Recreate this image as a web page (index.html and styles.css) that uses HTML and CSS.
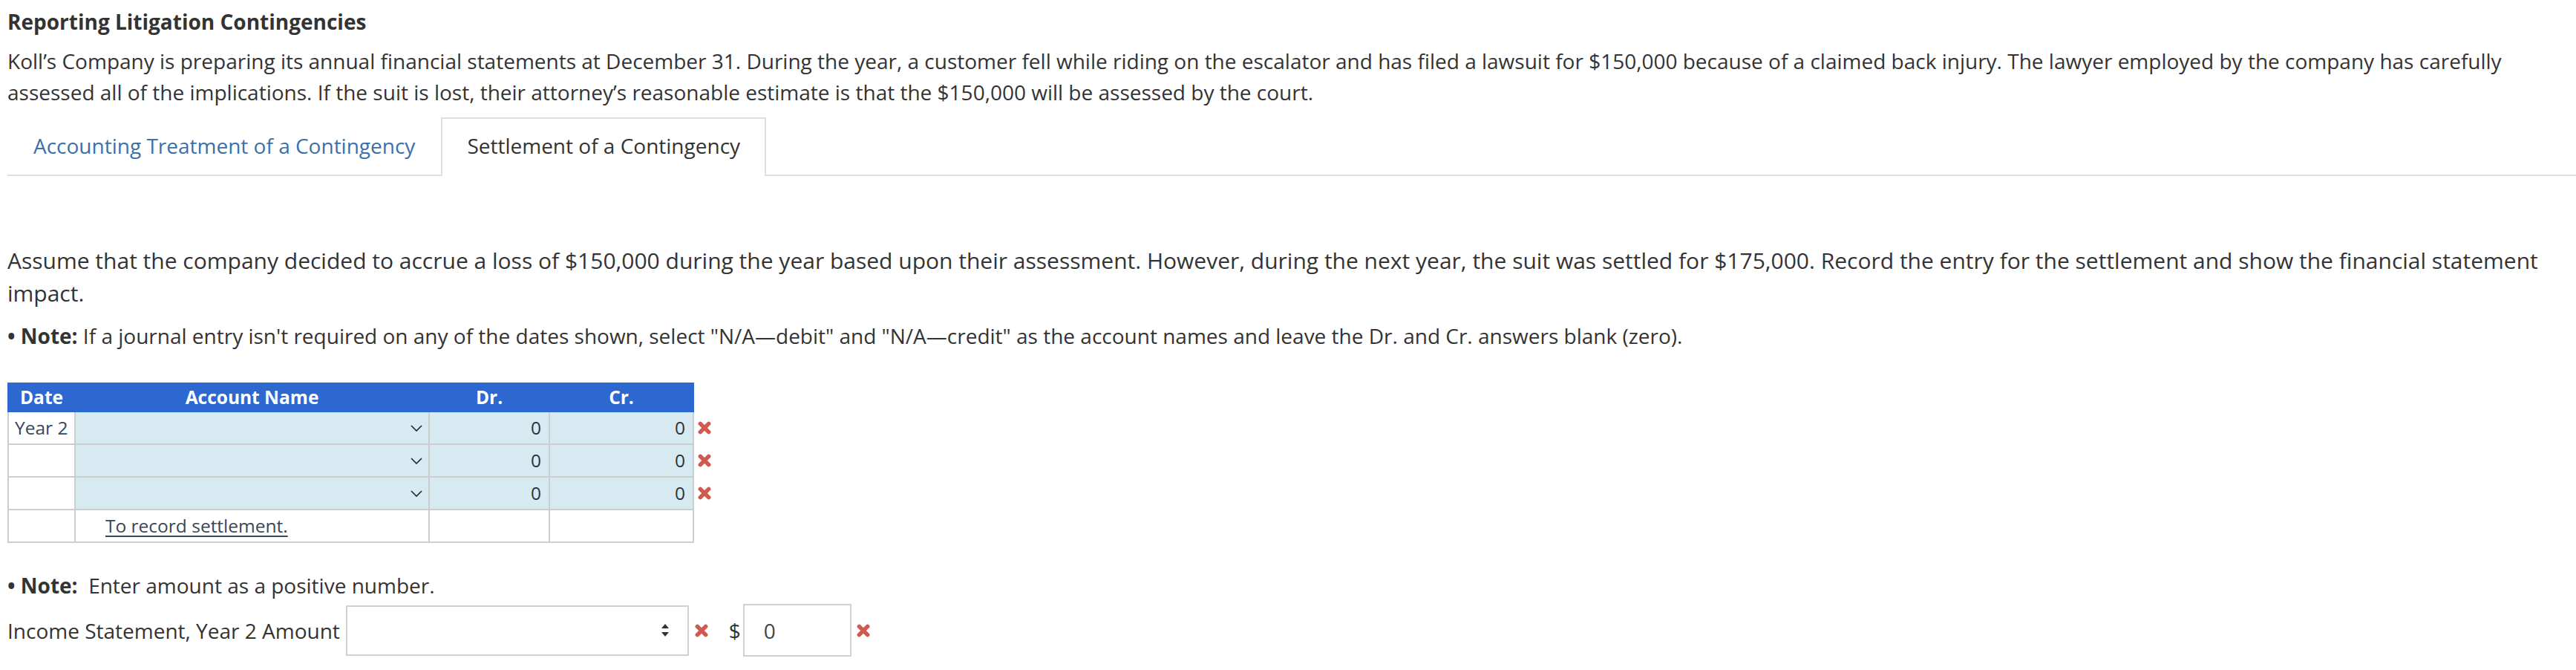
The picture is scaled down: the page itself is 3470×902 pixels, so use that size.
FILE: index.html
```html
<!DOCTYPE html>
<html lang="en">
<head>
<meta charset="utf-8">
<title>Reporting Litigation Contingencies</title>
<link rel="stylesheet" href="styles.css">
</head>
<body>
<div class="page">
  <h1 class="title">Reporting Litigation Contingencies</h1>
  <p class="intro">Koll’s Company is preparing its annual financial statements at December 31. During the year, a customer fell while riding on the escalator and has filed a lawsuit for $150,000 because of a claimed back injury. The lawyer employed by the company has carefully assessed all of the implications. If the suit is lost, their attorney’s reasonable estimate is that the $150,000 will be assessed by the court.</p>

  <div class="tabs">
    <a class="tab" href="#">Accounting Treatment of a Contingency</a>
    <span class="tab active">Settlement of a Contingency</span>
  </div>

  <div class="panel">
    <p class="question">Assume that the company decided to accrue a loss of $150,000 during the year based upon their assessment. However, during the next year, the suit was settled for $175,000. Record the entry for the settlement and show the financial statement impact.</p>
    <p class="note"><strong>• Note:</strong> If a journal entry isn't required on any of the dates shown, select "N/A—debit" and "N/A—credit" as the account names and leave the Dr. and Cr. answers blank (zero).</p>

    <table class="journal">
      <colgroup>
        <col class="c-date"><col class="c-acct"><col class="c-dr"><col class="c-cr"><col class="c-mark">
      </colgroup>
      <thead>
        <tr><th>Date</th><th>Account Name</th><th>Dr.</th><th>Cr.</th><th class="mark-h"></th></tr>
      </thead>
      <tbody>
        <tr>
          <td class="date">Year 2</td>
          <td class="edit"><div class="acct"><span class="acct-val"></span><svg class="chev" viewBox="0 0 16 9"><path d="M1 1 L8 8 L15 1"/></svg></div></td>
          <td class="edit num">0</td>
          <td class="edit num">0</td>
          <td class="mark"><svg class="xmark" viewBox="0 0 16 16"><path d="M3 3 L13 13 M13 3 L3 13"/></svg></td>
        </tr>
        <tr>
          <td class="date"></td>
          <td class="edit"><div class="acct"><span class="acct-val"></span><svg class="chev" viewBox="0 0 16 9"><path d="M1 1 L8 8 L15 1"/></svg></div></td>
          <td class="edit num">0</td>
          <td class="edit num">0</td>
          <td class="mark"><svg class="xmark" viewBox="0 0 16 16"><path d="M3 3 L13 13 M13 3 L3 13"/></svg></td>
        </tr>
        <tr>
          <td class="date"></td>
          <td class="edit"><div class="acct"><span class="acct-val"></span><svg class="chev" viewBox="0 0 16 9"><path d="M1 1 L8 8 L15 1"/></svg></div></td>
          <td class="edit num">0</td>
          <td class="edit num">0</td>
          <td class="mark"><svg class="xmark" viewBox="0 0 16 16"><path d="M3 3 L13 13 M13 3 L3 13"/></svg></td>
        </tr>
        <tr>
          <td class="date"></td>
          <td class="memo"><span class="memo-text">To record settlement.</span></td>
          <td></td>
          <td></td>
          <td class="mark"></td>
        </tr>
      </tbody>
    </table>

    <p class="note2"><strong>• Note:</strong>&nbsp; Enter amount as a positive number.</p>
    <div class="amount-row">
      <span class="amount-label">Income Statement, Year 2 Amount</span>
      <div class="fake-select">
        <svg class="spin" viewBox="0 0 10 18"><path d="M5 0 L10 6 L0 6 Z M0 11 L10 11 L5 17 Z"/></svg>
      </div>
      <svg class="xmark after-select" viewBox="0 0 16 16"><path d="M3 3 L13 13 M13 3 L3 13"/></svg>
      <span class="dollar">$</span>
      <div class="amount-box">0</div>
      <svg class="xmark after-amount" viewBox="0 0 16 16"><path d="M3 3 L13 13 M13 3 L3 13"/></svg>
    </div>
  </div>
</div>
</body>
</html>
```

FILE: styles.css
```css
* { box-sizing: border-box; }

body {
  margin: 0;
  background: #fff;
  color: #333;
  font-family: "Open Sans", "Liberation Sans", sans-serif;
}

.page {
  padding: 8px 0 0 10px;
}

.title {
  margin: 0 0 11px;
  font-size: 28px;
  font-weight: 700;
  line-height: 42px;
  color: #333;
}

.intro {
  margin: 0 0 13px;
  font-size: 28px;
  line-height: 42px;
}

/* Tabs */
.tabs {
  display: flex;
  align-items: flex-start;
  border-bottom: 2px solid #dcdfe3;
}

.tab {
  font-size: 28px;
  line-height: 40px;
  padding: 16px 33px 19px;
  border: 2px solid transparent;
  border-bottom: 0;
  color: #3b70a9;
  text-decoration: none;
}

.tab.active {
  border-color: #dcdfe3;
  background: #fff;
  color: #333;
  padding-bottom: 21px;
  margin-bottom: -2px;
}

/* Panel */
.panel {
  padding-top: 92px;
}

.question {
  margin: 0 0 13px;
  font-size: 30px;
  line-height: 44px;
}

.note {
  margin: 0 0 41px;
  font-size: 28px;
  line-height: 44px;
}

/* Journal table */
.journal {
  border-collapse: collapse;
  table-layout: fixed;
  width: 954px;
  font-size: 24.5px;
}

.c-date { width: 90px; }
.c-acct { width: 477px; }
.c-dr { width: 162px; }
.c-cr { width: 194px; }
.c-mark { width: 31px; }

.journal th {
  height: 38px;
  padding: 0;
  background: #2d67d0;
  border: 2px solid #2d67d0;
  color: #fff;
  font-weight: 700;
  text-align: center;
  line-height: 34px;
}

.journal th.mark-h {
  background: transparent;
  border: none;
}

.journal td {
  height: 44px;
  padding: 0;
  border: 2px solid #cdcdcd;
  line-height: 40px;
  color: #333;
}

.journal td.date {
  padding-left: 8px;
  color: #3a4659;
}

.journal td.edit {
  background: #d8eaf1;
}

.journal td.num {
  text-align: right;
  padding-right: 10px;
}

.journal td.mark {
  border: none;
  padding-left: 5px;
  vertical-align: middle;
}

.journal td.memo {
  padding-left: 40px;
}

.acct {
  display: flex;
  align-items: center;
  justify-content: space-between;
  padding-right: 8px;
}

.chev {
  width: 16px;
  height: 9px;
  fill: none;
  stroke: #222;
  stroke-width: 1.6;
}

.memo-text {
  color: #3a4659;
  text-decoration: underline;
  text-decoration-thickness: 2px;
  text-underline-offset: 4px;
}

.xmark {
  display: block;
  width: 18px;
  height: 18px;
  fill: none;
  stroke: #d05a50;
  stroke-width: 5;
  stroke-linecap: round;
}

/* Bottom amount row */
.note2 {
  margin: 35px 0 3px;
  font-size: 28px;
  line-height: 44px;
}

.amount-row {
  display: flex;
  align-items: center;
  font-size: 28px;
  line-height: 44px;
}

.fake-select {
  width: 462px;
  height: 68px;
  margin-left: 8px;
  border: 2px solid #cdd2d7;
  background: #fff;
  display: flex;
  align-items: center;
  justify-content: flex-end;
  padding-right: 25px;
}

.spin {
  width: 10px;
  height: 18px;
  fill: #333;
}

.after-select { margin-left: 8px; }

.dollar {
  margin-left: 28px;
}

.amount-box {
  width: 146px;
  height: 71px;
  margin-left: 3px;
  border: 2px solid #cdd2d7;
  padding-left: 26px;
  display: flex;
  align-items: center;
  color: #444;
}

.after-amount { margin-left: 7px; }
```
